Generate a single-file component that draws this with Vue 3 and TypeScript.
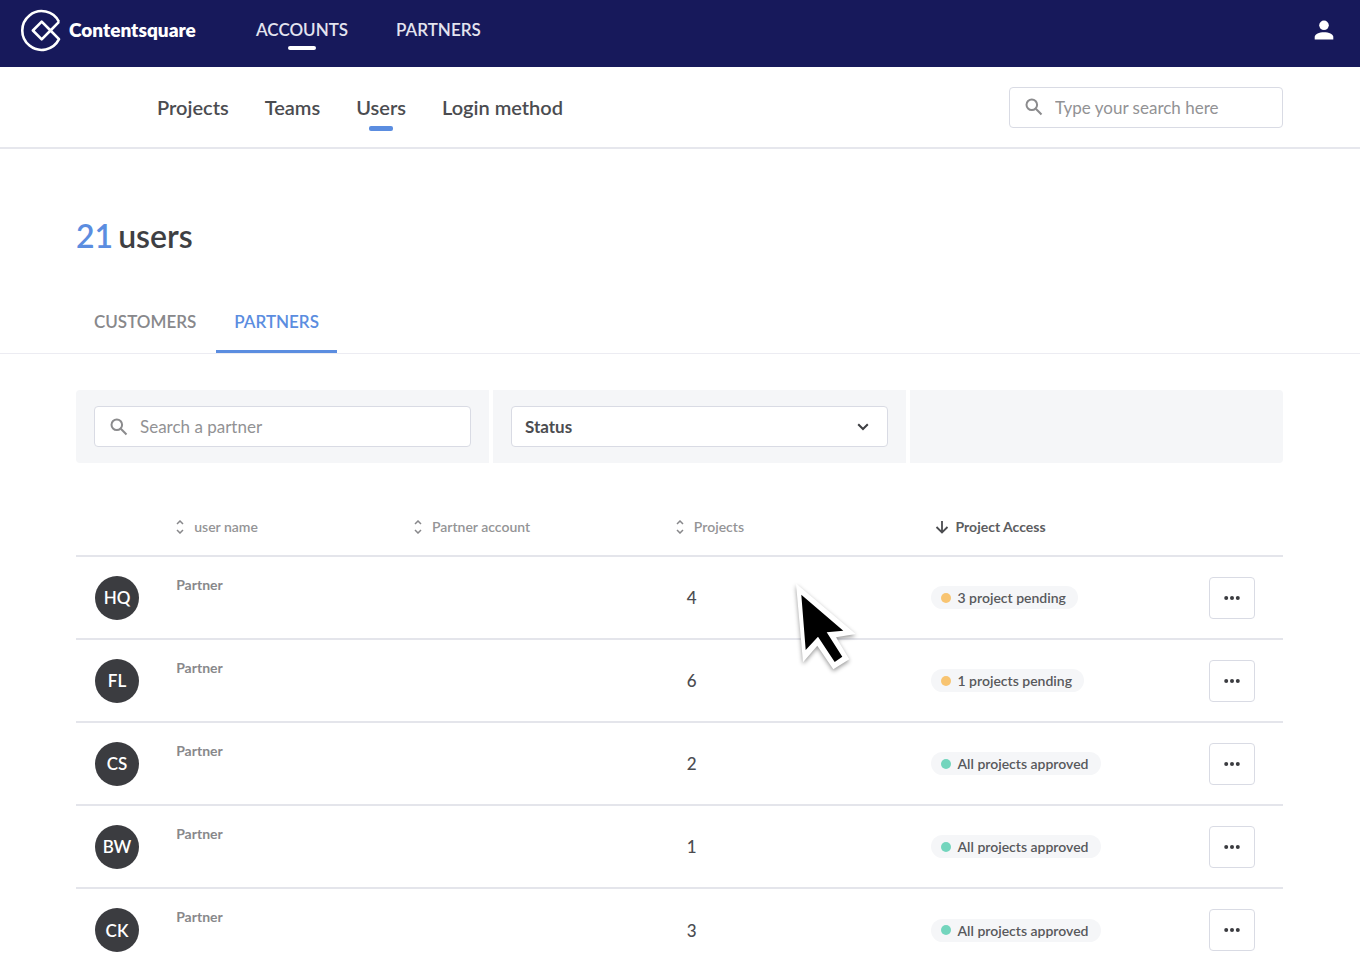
<script setup lang="ts">
import { ref } from 'vue'

interface PartnerUser {
  initials: string
  projects: number
  access: string
  pending: boolean
}

interface Column {
  label: string
  sorted: boolean
}

const mainNav = ['ACCOUNTS', 'PARTNERS']
const subNav = ['Projects', 'Teams', 'Users', 'Login method']
const tabs = ['CUSTOMERS', 'PARTNERS']
const activeTab = ref('PARTNERS')
const search = ref('')
const partnerSearch = ref('')

const columns: Column[] = [
  { label: 'user name', sorted: false },
  { label: 'Partner account', sorted: false },
  { label: 'Projects', sorted: false },
  { label: 'Project Access', sorted: true },
]

const users: PartnerUser[] = [
  { initials: 'HQ', projects: 4, access: '3 project pending', pending: true },
  { initials: 'FL', projects: 6, access: '1 projects pending', pending: true },
  { initials: 'CS', projects: 2, access: 'All projects approved', pending: false },
  { initials: 'BW', projects: 1, access: 'All projects approved', pending: false },
  { initials: 'CK', projects: 3, access: 'All projects approved', pending: false },
]
</script>

<template>
  <div class="page">
    <header class="topbar">
      <a class="brand" href="#">
        <svg class="brand-mark" width="42" height="44" viewBox="0 0 42 44" aria-hidden="true">
          <path d="M39 13.8A19.4 19.4 0 1 0 39 31.2L30.5 22.5L21.7 13.7L12.9 22.5L21.7 31.3L30.5 22.5L39 13.8" fill="none" stroke="#fff" stroke-width="2.6" stroke-linejoin="round" />
        </svg>
        <span>Contentsquare</span>
      </a>
      <nav class="main-nav" aria-label="Main">
        <a v-for="(item, i) in mainNav" :key="item" href="#" :class="{ active: i === 0 }">{{ item }}</a>
      </nav>
      <button class="profile" type="button" aria-label="Profile">
        <svg width="20" height="20" viewBox="0 0 20 20" aria-hidden="true">
          <circle cx="10" cy="5.3" r="4.8" fill="#fff" />
          <path d="M.7 19.4V17C.7 14 5.2 12.2 10 12.2s9.3 1.8 9.3 4.8v2.4z" fill="#fff" />
        </svg>
      </button>
    </header>

    <div class="subbar">
      <nav class="sub-nav" aria-label="Accounts">
        <a v-for="item in subNav" :key="item" href="#" :class="{ active: item === 'Users' }">{{ item }}</a>
      </nav>
      <label class="field site-search">
        <svg width="18" height="18" viewBox="0 0 18 18" aria-hidden="true">
          <circle cx="6.8" cy="6.8" r="5.3" /><path d="M10.8 10.8L16.5 16.5" />
        </svg>
        <input v-model="search" type="text" placeholder="Type your search here" aria-label="Search" />
      </label>
    </div>

    <main>
      <h1><span class="total">21</span> <span>users</span></h1>

      <div class="tabs" role="tablist">
        <button
          v-for="tab in tabs"
          :key="tab"
          type="button"
          role="tab"
          :aria-selected="tab === activeTab"
          :class="{ active: tab === activeTab }"
          @click="activeTab = tab"
        >{{ tab }}</button>
      </div>

      <div class="filters">
        <div class="filter">
          <label class="field">
            <svg width="18" height="18" viewBox="0 0 18 18" aria-hidden="true">
              <circle cx="6.8" cy="6.8" r="5.3" /><path d="M10.8 10.8L16.5 16.5" />
            </svg>
            <input v-model="partnerSearch" type="text" placeholder="Search a partner" aria-label="Search a partner" />
          </label>
        </div>
        <div class="filter">
          <div class="select">
            <select aria-label="Status">
              <option>Status</option>
            </select>
            <svg width="12" height="8" viewBox="0 0 12 8" aria-hidden="true"><path d="M1.2 1.2L6 6l4.800-4.800" /></svg>
          </div>
        </div>
        <div class="filter"></div>
      </div>

      <table>
        <colgroup>
          <col class="col-avatar" /><col class="col-name" /><col class="col-account" /><col class="col-projects" /><col class="col-access" /><col />
        </colgroup>
        <thead>
          <tr>
            <td></td>
            <th v-for="column in columns" :key="column.label" scope="col">
              <button type="button" class="sort" :class="{ sorted: column.sorted }">
                <svg v-if="column.sorted" width="14" height="14" viewBox="0 0 14 14" aria-hidden="true"><path d="M7 1v11.500M1.500 7L7 12.500L12.500 7" /></svg>
                <svg v-else width="8" height="14" viewBox="0 0 8 14" aria-hidden="true"><path d="M1 4L4 1l3 3M1 10l3 3l3-3" /></svg>
                {{ column.label }}
              </button>
            </th>
            <td></td>
          </tr>
        </thead>
        <tbody>
          <tr v-for="user in users" :key="user.initials">
            <td class="avatar-cell"><span class="avatar">{{ user.initials }}</span></td>
            <td class="role">Partner</td>
            <td></td>
            <td class="count">{{ user.projects }}</td>
            <td><span class="badge" :class="{ pending: user.pending }">{{ user.access }}</span></td>
            <td class="actions">
              <button type="button" class="more" :aria-label="'Actions for ' + user.initials">
                <svg width="16" height="4" viewBox="0 0 16 4" aria-hidden="true">
                  <circle cx="2.200" cy="2" r="2" /><circle cx="8" cy="2" r="2" /><circle cx="13.800" cy="2" r="2" />
                </svg>
              </button>
            </td>
          </tr>
        </tbody>
      </table>
    </main>

    <svg class="pointer" width="76" height="100" viewBox="0 0 76 100" aria-hidden="true">
      <path d="M6 5.500L65.700 56L46 59.300L59.300 81.300L43.300 91.300L27.300 67.700L13 84.300z" fill="#fff" />
      <path d="M11.300 16.700L53.300 52.700L36.700 54.300L52.300 78.700L44.700 84L28 58.700L15.700 72z" fill="#000" />
    </svg>
  </div>
</template>

<style>
body {
  margin: 0;
  background: #fff;
}
</style>

<style scoped>
.page {
  position: relative;
  overflow: hidden;
  color: #4b4c50;
  font-family: Lato, "Liberation Sans", sans-serif;
  font-size: 17px;
}

* {
  box-sizing: border-box;
}

a {
  color: inherit;
  text-decoration: none;
}

button,
input,
select {
  margin: 0;
  padding: 0;
  border: 0;
  background: none;
  color: inherit;
  font: inherit;
}

.topbar {
  display: flex;
  align-items: center;
  height: 67px;
  padding: 0 26px 8px 20px;
  background: #17195b;
  color: #fff;
}

.brand {
  display: flex;
  align-items: center;
  gap: 7px;
  width: 236px;
  font-size: 19px;
  font-weight: 800;
}

.main-nav {
  display: flex;
  gap: 48px;
  color: #e4e4ef;
  font-size: 17px;
  font-weight: 600;
}

.main-nav a,
.sub-nav a {
  position: relative;
}

.main-nav .active::after,
.sub-nav .active::after {
  position: absolute;
  top: 27px;
  left: 50%;
  width: 28px;
  height: 4px;
  margin-left: -14px;
  border-radius: 2px;
  background: #fff;
  content: "";
}

.profile {
  display: flex;
  margin-left: auto;
}

.subbar {
  display: flex;
  align-items: center;
  justify-content: space-between;
  height: 82px;
  padding: 0 77px 0 157px;
  border-bottom: 2px solid #e6e7ed;
}

.sub-nav {
  display: flex;
  gap: 36px;
  font-size: 20px;
  font-weight: 600;
}

.sub-nav .active::after {
  top: 31px;
  width: 24px;
  height: 5px;
  margin-left: -12px;
  background: #5b8de0;
}

.field {
  display: flex;
  align-items: center;
  gap: 12px;
  width: 100%;
  height: 41px;
  padding: 0 15px;
  border: 1px solid #d9dbe4;
  border-radius: 4px;
  background: #fff;
}

.field svg {
  flex: none;
  fill: none;
  stroke: #8b8b8d;
  stroke-width: 2;
}

.field input {
  flex: 1;
  min-width: 0;
  height: 100%;
  outline: 0;
}

.field input::placeholder {
  color: #929294;
  opacity: 1;
}

.site-search {
  width: 274px;
}

h1 {
  display: flex;
  gap: 5px;
  margin: 0;
  padding: 68px 76px 0;
  color: #3e3f43;
  font-size: 32px;
  font-weight: 600;
  line-height: 38px;
}

.total {
  color: #5b8de0;
}

.tabs {
  display: flex;
  gap: 2px;
  height: 99px;
  padding: 37px 76px 0;
  border-bottom: 1px solid #ececf2;
}

.tabs button {
  padding: 0 18px;
  border-bottom: 3px solid transparent;
  color: #88888b;
  font-size: 17px;
  font-weight: 600;
}

.tabs .active {
  border-color: #5b8de0;
  color: #5b8de0;
}

.filters {
  display: grid;
  grid-template-columns: 413fr 413fr 373fr;
  gap: 4px;
  margin: 36px 77px 0 76px;
}

.filter {
  height: 73px;
  padding: 16px 18px;
  background: #f5f6f8;
}

.filter:first-child {
  border-radius: 4px 0 0 4px;
}

.filter:last-child {
  border-radius: 0 4px 4px 0;
}

.select {
  position: relative;
  display: flex;
}

.select select {
  width: 100%;
  height: 41px;
  padding: 0 13px;
  border: 1px solid #d9dbe4;
  border-radius: 4px;
  background: #fff;
  font-size: 17px;
  font-weight: 700;
  appearance: none;
}

.select svg {
  position: absolute;
  top: 17px;
  right: 19px;
  fill: none;
  stroke: #3e3f43;
  stroke-width: 2;
  pointer-events: none;
}

table {
  width: calc(100% - 153px);
  margin: 35px 77px 0 76px;
  border-collapse: collapse;
  table-layout: fixed;
}

.col-avatar { width: 8.3%; }
.col-name { width: 19.7%; }
.col-account { width: 21.7%; }
.col-projects { width: 21.1%; }
.col-access { width: 18%; }

th,
td {
  padding: 0;
  text-align: left;
}

thead tr {
  height: 58px;
}

.sort {
  display: flex;
  align-items: center;
  gap: 10px;
  color: #949496;
  font-size: 14px;
  font-weight: 600;
}

.sort svg {
  fill: none;
  stroke: #88888b;
  stroke-width: 1.5;
}

.sort.sorted {
  gap: 7px;
  padding-left: 4px;
  color: #5c5d60;
  font-weight: 700;
}

.sorted svg {
  stroke: #4b4c50;
  stroke-width: 1.8;
}

tbody tr {
  height: 83px;
  border-top: 2px solid #e4e5eb;
}

.avatar-cell {
  padding-left: 19px;
}

.avatar {
  display: flex;
  align-items: center;
  justify-content: center;
  width: 44px;
  height: 44px;
  border-radius: 50%;
  background: #3b3c40;
  color: #fff;
  font-size: 17px;
  font-weight: 600;
}

.role {
  padding-top: 19px;
  color: #88888b;
  font-size: 14px;
  font-weight: 700;
  vertical-align: top;
}

.count {
  padding-left: 11px;
  font-weight: 500;
}

.badge {
  display: inline-flex;
  align-items: center;
  gap: 7px;
  height: 23px;
  padding: 0 12px 0 10px;
  border-radius: 12px;
  background: #f5f6f8;
  color: #58595c;
  font-size: 14px;
  font-weight: 600;
}

.badge::before {
  width: 10px;
  height: 10px;
  border-radius: 50%;
  background: #73d5bd;
  content: "";
}

.badge.pending::before {
  background: #f8c471;
}

.actions {
  padding-right: 28px;
}

.more {
  display: flex;
  align-items: center;
  justify-content: center;
  width: 46px;
  height: 42px;
  margin-left: auto;
  border: 1px solid #d9dbe4;
  border-radius: 4px;
  background: #fff;
}

.more svg {
  fill: #3b3c40;
}

.pointer {
  position: absolute;
  top: 578px;
  left: 790px;
  filter: drop-shadow(0 2px 2px rgba(0, 0, 0, 0.4));
  pointer-events: none;
}
</style>
